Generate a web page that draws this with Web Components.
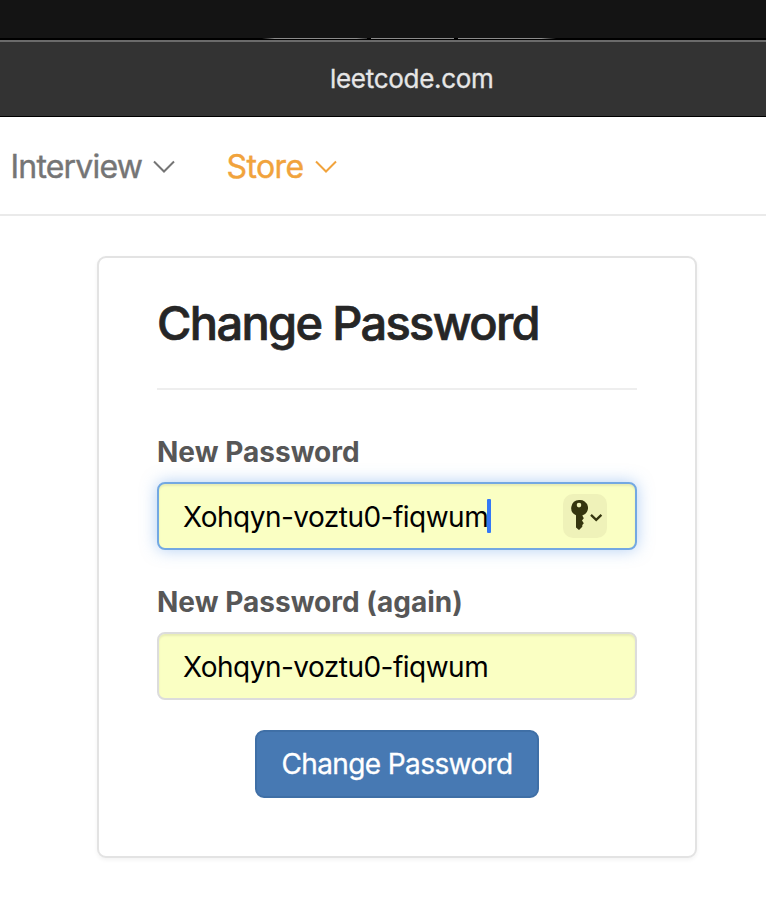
<!DOCTYPE html>
<html lang="en">
<head>
<meta charset="utf-8">
<title>Change Password</title>
<style>
html,body{margin:0;background:#fff}
body{width:766px;height:910px;overflow:hidden;font-family:Inter,"Liberation Sans",sans-serif}
</style>
</head>
<body>
<app-page></app-page>
<script>
const define = (name, html) => customElements.define(name, class extends HTMLElement {
  constructor() {
    super();
    const t = document.createElement('template');
    t.innerHTML = html;
    this.attachShadow({ mode: 'open' }).append(t.content.cloneNode(true));
  }
});

define('browser-chrome', `<style>
:host{display:block;color:#e6e6e6}
.tabs{height:38px;background:#141414}
.edge{height:2px;background:#000;display:flex;gap:4px;padding-left:262px}
.edge i{height:1px;background:#8b8b8b}
.edge i:nth-child(1){width:105px;background:linear-gradient(90deg,#000,#8b8b8b 12%,#8b8b8b 90%,#333)}
.edge i:nth-child(2){width:83px}
.edge i:nth-child(3){width:98px;background:linear-gradient(90deg,#8b8b8b 85%,#000)}
.bar{height:76px;box-sizing:border-box;border-top:2px solid #6b6b6b;background:#333;box-shadow:0 1px #000;display:flex;padding:0 0 0 330px;align-items:center}
span{font-size:26px;line-height:32px;-webkit-text-stroke:.3px;letter-spacing:-.3px;white-space:nowrap}
</style><div class="tabs"></div><div class="edge"><i></i><i></i><i></i></div><div class="bar"><span><slot></slot></span></div>`);

define('nav-item', `<style>
:host{display:flex;align-items:center;white-space:nowrap;font-size:32px;line-height:40px;letter-spacing:-.8px}
span{-webkit-text-stroke:.4px}
svg{display:block;margin-left:11px}
</style><span><slot></slot></span><svg width="22" height="14" viewBox="0 0 22 14" fill="none" stroke="currentColor" stroke-width="2"><path d="M1 1.500 11 11.500 21 1.500"/></svg>`);

define('site-nav', `<style>
:host{display:flex;box-sizing:border-box;height:100px;border-bottom:2px solid #eaeaea;padding:4px 0 0 10.500px;align-items:center}
.interview{width:216px;color:#757575}
.store{color:#f1a33c;letter-spacing:-.6px}
</style><nav-item class="interview">Interview</nav-item><nav-item class="store">Store</nav-item>`);

define('key-button', `<style>
:host{display:block;width:44px;height:44px;border-radius:10px;background:#eff2b9}
svg{display:block}
</style><svg width="44" height="44" viewBox="0 0 44 44"><path fill="#35350f" fill-rule="evenodd" d="M16 6a8 8 0 0 0-3 15.300V33.500L16 36l3.300-3.300V31l1.500-1.800-1.800-2.700 1.800-2.300-1.500-2.600A8 8 0 0 0 16 6Zm0 2.800a2.300 2.300 0 1 1 0 4.600 2.300 2.300 0 0 1 0-4.600Z"/><path d="m28 20.800 5.200 5 5.200-5" fill="none" stroke="#35350f" stroke-width="2.300"/></svg>`);

define('password-field', `<style>
:host{display:block;height:150px;color:#575757}
label{display:block;font-size:28px;font-weight:700;line-height:40px;height:50px;white-space:nowrap;letter-spacing:.02px}
.box{box-sizing:border-box;height:68px;border:2px solid #dcdcdc;border-radius:8px;background:#faffc3;box-shadow:inset 0 2px 2px rgba(0,0,0,.075);display:flex;align-items:center;padding:0 28px 0 24px;color:#000;font-size:28px}
:host([focused]) .box{border-color:#73a8e2;box-shadow:inset 0 2px 2px rgba(0,0,0,.075),0 0 16px rgba(102,160,233,.5)}
.value{letter-spacing:-.52px;white-space:nowrap;line-height:40px;padding-top:2px}
.caret{display:none;width:4px;height:34px;border-radius:1px;background:#3478f6;margin:0 auto 0 -1px}
:host([focused]) .caret{display:block}
</style><label><slot></slot></label><div class="box"><span class="value"><slot name="value"></slot></span><i class="caret"></i><slot name="action"></slot></div>`);

define('primary-button', `<style>
:host{display:block}
button{display:block;box-sizing:border-box;width:284px;height:68px;margin:-2px auto 0;padding:0;border:2px solid #3f6fa6;border-radius:9px;background:#4779b3;color:#fff;font:400 28px/40px Inter,"Liberation Sans",sans-serif;-webkit-text-stroke:.3px;letter-spacing:-.6px;white-space:nowrap}
</style><button type="button"><slot></slot></button>`);

define('form-card', `<style>
:host{display:block;box-sizing:border-box;width:600px;height:602px;margin:40px 0 0 97px;padding:34px 58px 0;border:2px solid #e3e3e3;border-radius:9px;background:#fff;box-shadow:0 2px 4px rgba(0,0,0,.05)}
h1{margin:0 0 42px;height:96px;border-bottom:2px solid #eee;font-size:47px;font-weight:500;-webkit-text-stroke:.7px;line-height:61px;color:#262626;letter-spacing:-1.68px;white-space:nowrap}
</style><h1><slot name="title"></slot></h1><slot></slot>`);

define('app-page', `<style>:host{display:block}form-card>[slot=title]{display:block}</style>
<browser-chrome>leetcode.com</browser-chrome>
<site-nav></site-nav>
<form-card><span slot="title">Change Password</span>
<password-field focused>New Password<span slot="value">Xohqyn-voztu0-fiqwum</span><key-button slot="action"></key-button></password-field>
<password-field>New Password (again)<span slot="value">Xohqyn-voztu0-fiqwum</span></password-field>
<primary-button>Change Password</primary-button></form-card>`);
</script>
</body>
</html>
